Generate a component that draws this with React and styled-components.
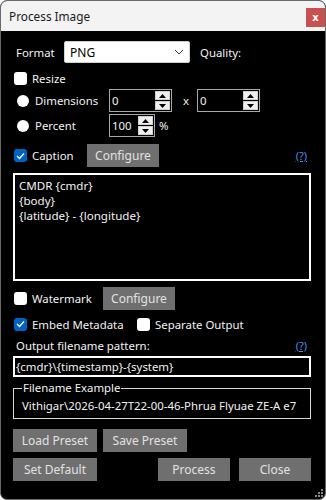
import React from 'react';
import styled, { createGlobalStyle } from 'styled-components';

const Global = createGlobalStyle`
  html, body { margin: 0; padding: 0; background: #fff; }
  body { font-family: "Noto Sans", "Open Sans", sans-serif; font-size: 11.4px; }
`;

const Window = styled.div`
  width: 326px;
  height: 500px;
  box-sizing: border-box;
  border: 1px solid #6a6a6a;
  border-radius: 7px;
  overflow: hidden;
  background: #000;
  color: #f2f2f2;
  display: flex;
  flex-direction: column;
  position: relative;
`;

const TitleBar = styled.div`
  height: 30px;
  flex: none;
  background: #f3f3f3;
  color: #1a1a1a;
  display: flex;
  align-items: center;
  padding-left: 8px;
  font-size: 11.8px;
  position: relative;
`;

const CloseBtn = styled.div`
  position: absolute;
  right: 0;
  top: 7px;
  width: 19px;
  height: 19px;
  background: #c75050;
  color: #fff;
  font-size: 10px;
  font-weight: 700;
  display: flex;
  align-items: center;
  justify-content: center;
  font-family: "DejaVu Sans", sans-serif;
`;

const Content = styled.div`
  padding: 0 14px 0 12px;
  display: flex;
  flex-direction: column;
`;

const Row = styled.div`
  display: flex;
  align-items: center;
  height: ${p => p.h || 16}px;
  margin-top: ${p => p.mt || 0}px;
`;

const Label = styled.span`
  color: #f2f2f2;
  white-space: nowrap;
  margin-left: ${p => p.ml || 0}px;
  width: ${p => (p.w ? p.w + 'px' : 'auto')};
  flex: none;
`;

const Select = styled.div`
  width: 126px;
  height: 22px;
  box-sizing: border-box;
  background: #fff;
  border: 1px solid #d0d0d0;
  border-radius: 2px;
  color: #000;
  display: flex;
  align-items: center;
  justify-content: space-between;
  padding: 0 5px 0 5px;
  font-size: 12px;
`;

const CheckBox = styled.span`
  width: 13px;
  height: 13px;
  box-sizing: border-box;
  border-radius: 3px;
  background: ${p => (p.checked ? '#0063c3' : '#fff')};
  margin-left: ${p => p.ml || 1}px;
  flex: none;
  display: flex;
  align-items: center;
  justify-content: center;
`;

const Radio = styled.span`
  width: 12px;
  height: 12px;
  border-radius: 50%;
  background: #fff;
  margin-left: 4px;
  flex: none;
`;

const Spin = styled.div`
  width: ${p => p.w}px;
  height: 23px;
  box-sizing: border-box;
  border: 1px solid #a8a8a8;
  display: flex;
  align-items: center;
  justify-content: space-between;
  padding: 1px 1px 1px 2px;
  margin-left: ${p => p.ml || 0}px;
  flex: none;
`;

const SpinText = styled.span`
  color: #f2f2f2;
`;

const SpinButtons = styled.div`
  width: 15px;
  height: 19px;
  display: flex;
  flex-direction: column;
  gap: 1px;
`;

const SpinArrow = styled.div`
  flex: 1;
  background: #f0f0f0;
  border: 1px solid #cfcfcf;
  box-sizing: border-box;
  display: flex;
  align-items: center;
  justify-content: center;
`;

const Button = styled.div`
  width: ${p => p.w || 72}px;
  height: 23px;
  background: #6f6f6f;
  color: #e2e2e2;
  display: flex;
  align-items: center;
  justify-content: center;
  margin-left: ${p => p.ml || 0}px;
  flex: none;
  font-size: 12px;
`;

const Help = styled.span`
  margin-left: auto;
  margin-right: 4px;
  color: #4a90e2;
  text-decoration: underline;
  font-size: 11px;
`;

const TextArea = styled.div`
  height: 108px;
  margin-top: 6px;
  box-sizing: border-box;
  border: 2px solid #fff;
  padding: 3px 4px;
  line-height: 15px;
  color: #f2f2f2;
  font-size: 11.6px;
`;

const Input = styled.div`
  height: 21px;
  margin-top: 3px;
  box-sizing: border-box;
  border: 2px solid #fff;
  padding: 0 1px;
  display: flex;
  align-items: center;
  white-space: nowrap;
`;

const Group = styled.fieldset`
  margin: 4px 0 0 0;
  padding: 3px 8px 6px 8px;
  border: 1px solid #d8d8d8;
  height: 38px;
  box-sizing: border-box;
  min-width: 0;
`;

const Legend = styled.legend`
  padding: 0 1px;
  margin-left: 0;
  color: #f2f2f2;
  line-height: 14px;
`;

const GroupText = styled.div`
  white-space: nowrap;
  line-height: 16px;
`;

const Grip = styled.svg`
  position: absolute;
  right: 2px;
  bottom: 2px;
`;

const Up = () => (
  <svg width="7" height="4" viewBox="0 0 7 4"><path d="M0 4 L3.5 0 L7 4 Z" fill="#000" /></svg>
);
const Down = () => (
  <svg width="7" height="4" viewBox="0 0 7 4"><path d="M0 0 L3.5 4 L7 0 Z" fill="#000" /></svg>
);

const Check = () => (
  <svg width="9" height="8" viewBox="0 0 9 8"><path d="M1 4 L3.5 6.5 L8 1.5" stroke="#fff" strokeWidth="1.3" fill="none" /></svg>
);

function SpinBox({ w, ml, value }) {
  return (
    <Spin w={w} ml={ml}>
      <SpinText>{value}</SpinText>
      <SpinButtons>
        <SpinArrow><Up /></SpinArrow>
        <SpinArrow><Down /></SpinArrow>
      </SpinButtons>
    </Spin>
  );
}

export default function App() {
  return (
    <>
      <Global />
      <Window>
        <TitleBar>
          Process Image
          <CloseBtn>x</CloseBtn>
        </TitleBar>
        <Content>
          <Row h={22} mt={10}>
            <Label ml={3} w={48}>Format</Label>
            <Select>
              <span>PNG</span>
              <svg width="10" height="6" viewBox="0 0 10 6"><path d="M1 1 L5 5 L9 1" stroke="#333" strokeWidth="1" fill="none" /></svg>
            </Select>
            <Label ml={10}>Quality:</Label>
          </Row>
          <Row mt={7}>
            <CheckBox />
            <Label ml={5}>Resize</Label>
          </Row>
          <Row h={23} mt={3}>
            <Radio />
            <Label ml={6} w={74}>Dimensions</Label>
            <SpinBox w={63} value="0" />
            <Label ml={11}>x</Label>
            <SpinBox w={63} ml={8} value="0" />
          </Row>
          <Row h={23} mt={2}>
            <Radio />
            <Label ml={6} w={74}>Percent</Label>
            <SpinBox w={46} value="100" />
            <Label ml={4}>%</Label>
          </Row>
          <Row h={23} mt={7}>
            <CheckBox checked><Check /></CheckBox>
            <Label ml={5} w={55}>Caption</Label>
            <Button>Configure</Button>
            <Help>(?)</Help>
          </Row>
          <TextArea>
            CMDR {'{cmdr}'}<br />
            {'{body}'}<br />
            {'{latitude} - {longitude}'}
          </TextArea>
          <Row h={23} mt={6}>
            <CheckBox />
            <Label ml={5} w={71}>Watermark</Label>
            <Button>Configure</Button>
          </Row>
          <Row mt={6}>
            <CheckBox checked><Check /></CheckBox>
            <Label ml={5} w={104}>Embed Metadata</Label>
            <CheckBox />
            <Label ml={5}>Separate Output</Label>
          </Row>
          <Row mt={5}>
            <Label ml={3}>Output filename pattern:</Label>
            <Help>(?)</Help>
          </Row>
          <Input>{'{cmdr}\\{timestamp}-{system}'}</Input>
          <Group>
            <Legend>Filename Example</Legend>
            <GroupText>Vithigar\2026-04-27T22-00-46-Phrua Flyuae ZE-A e7</GroupText>
          </Group>
          <Row h={23} mt={10}>
            <Button w={84}>Load Preset</Button>
            <Button w={84} ml={6}>Save Preset</Button>
          </Row>
          <Row h={23} mt={6}>
            <Button w={84}>Set Default</Button>
            <Button ml={61}>Process</Button>
            <Button ml={9}>Close</Button>
          </Row>
        </Content>
        <Grip width="8" height="8" viewBox="0 0 8 8">
          <rect x="6" y="0" width="2" height="2" fill="#888" />
          <rect x="3" y="3" width="2" height="2" fill="#888" />
          <rect x="6" y="3" width="2" height="2" fill="#888" />
          <rect x="0" y="6" width="2" height="2" fill="#888" />
          <rect x="3" y="6" width="2" height="2" fill="#888" />
          <rect x="6" y="6" width="2" height="2" fill="#888" />
        </Grip>
      </Window>
    </>
  );
}
